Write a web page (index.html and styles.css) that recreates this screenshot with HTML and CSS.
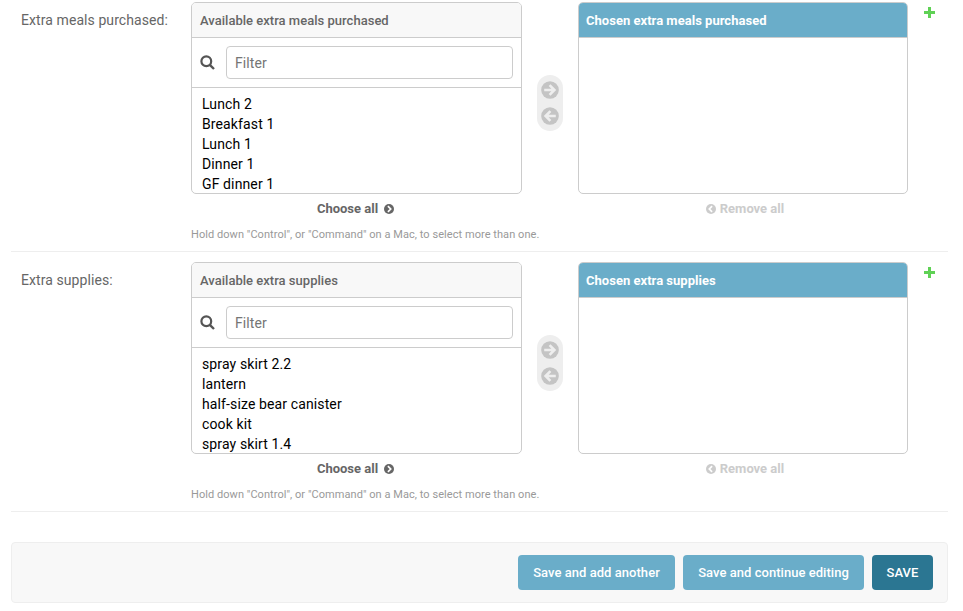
FILE: index.html
```html
<!DOCTYPE html>
<html lang="en">
<head>
<meta charset="utf-8">
<title>Change order</title>
<link rel="stylesheet" href="styles.css">
</head>
<body>
<svg class="defs" width="0" height="0" aria-hidden="true">
  <symbol id="search" viewBox="0 0 15 15"><circle cx="6.3" cy="6.3" r="4.9" fill="none" stroke="currentColor" stroke-width="2.2"/><path d="M9.8 9.8 14 14" stroke="currentColor" stroke-width="2.4"/></symbol>
  <symbol id="arrow" viewBox="0 0 18 18"><circle cx="9" cy="9" r="8.8" fill="#c4c4c4"/><path d="M3.2 9H13M8.6 4.2 13.4 9 8.6 13.8" fill="none" stroke="#eee" stroke-width="2.6"/></symbol>
  <symbol id="chevron" viewBox="0 0 10 10"><circle cx="5" cy="5" r="5" fill="currentColor"/><path d="M3.9 2.2 6.7 5 3.9 7.8" fill="none" stroke="#fff" stroke-width="1.7"/></symbol>
  <symbol id="plus" viewBox="0 0 11 11"><path d="M5.5 0V11M0 5.5H11" stroke="#5fd155" stroke-width="3"/></symbol>
</svg>
<main>
  <section class="form-row first">
    <label class="name">Extra meals purchased:</label>
    <div class="field">
      <div class="selector">
        <div class="available">
          <div class="box">
            <h2>Available extra meals purchased</h2>
            <div class="filter"><svg class="search"><use href="#search"/></svg><input type="text" placeholder="Filter"></div>
            <ul><li>Lunch 2</li><li>Breakfast 1</li><li>Lunch 1</li><li>Dinner 1</li><li>GF dinner 1</li></ul>
          </div>
          <a class="all">Choose all<svg class="chev"><use href="#chevron"/></svg></a>
        </div>
        <div class="chooser"><svg><use href="#arrow"/></svg><svg class="flip"><use href="#arrow"/></svg></div>
        <div class="chosen">
          <div class="box"><h2>Chosen extra meals purchased</h2></div>
          <a class="all off"><svg class="chev flip"><use href="#chevron"/></svg>Remove all</a>
        </div>
        <svg class="plus"><use href="#plus"/></svg>
      </div>
      <p class="help">Hold down "Control", or "Command" on a Mac, to select more than one.</p>
    </div>
  </section>
  <section class="form-row">
    <label class="name">Extra supplies:</label>
    <div class="field">
      <div class="selector">
        <div class="available">
          <div class="box">
            <h2>Available extra supplies</h2>
            <div class="filter"><svg class="search"><use href="#search"/></svg><input type="text" placeholder="Filter"></div>
            <ul><li>spray skirt 2.2</li><li>lantern</li><li>half-size bear canister</li><li>cook kit</li><li>spray skirt 1.4</li></ul>
          </div>
          <a class="all">Choose all<svg class="chev"><use href="#chevron"/></svg></a>
        </div>
        <div class="chooser"><svg><use href="#arrow"/></svg><svg class="flip"><use href="#arrow"/></svg></div>
        <div class="chosen">
          <div class="box"><h2>Chosen extra supplies</h2></div>
          <a class="all off"><svg class="chev flip"><use href="#chevron"/></svg>Remove all</a>
        </div>
        <svg class="plus"><use href="#plus"/></svg>
      </div>
      <p class="help">Hold down "Control", or "Command" on a Mac, to select more than one.</p>
    </div>
  </section>
  <div class="submit-row">
    <button class="another">Save and add another</button>
    <button class="continue">Save and continue editing</button>
    <button class="save">SAVE</button>
  </div>
</main>
</body>
</html>
```
FILE: styles.css
```css
* { box-sizing: border-box; }
body { margin: 0; background: #fff; color: #666; font: 14px/20px Roboto, "Liberation Sans", sans-serif; }
.defs { position: absolute; }
svg { display: block; flex: none; }
main { width: 937px; margin-left: 11px; }
.form-row { display: flex; height: 260px; padding: 10px 0 0 10px; border-bottom: 1px solid #eee; }
.form-row.first { height: 252px; padding-top: 2px; }
.name { width: 170px; padding-top: 8px; white-space: nowrap; letter-spacing: .08px; }
.selector { display: flex; align-items: flex-start; }
.available { width: 331px; }
.chosen { width: 330px; }
.box { height: 192px; overflow: hidden; border: 1px solid #ccc; border-radius: 5px; }
h2 { height: 34px; box-sizing: content-box; margin: 0; padding: 0 8px; border-bottom: 1px solid #ccc; background: #f8f8f8; font-size: 13px; font-weight: 500; line-height: 35px; letter-spacing: .02px; }
.chosen h2 { padding-left: 7px; background: #6aadc9; color: #fff; font-weight: 700; }
.filter { display: flex; align-items: center; height: 50px; padding: 0 8px; border-bottom: 1px solid #ccc; }
.search { width: 15px; height: 15px; margin-right: 11px; color: #555; }
input { width: 287px; height: 33px; padding: 0 8px; border: 1px solid #ccc; border-radius: 4px; font: 14px Roboto, sans-serif; letter-spacing: .1px; }
input::placeholder { color: #757575; opacity: 1; }
ul { margin: 0; padding: 6px 10px 0; list-style: none; color: #000; letter-spacing: .12px; }
.all { display: flex; justify-content: center; align-items: center; height: 30px; padding-right: 2px; font-size: 13px; font-weight: 700; }
.all.off { padding: 0 0 0 4px; color: #ccc; }
.chev { width: 10px; height: 10px; margin-left: 6px; }
.off .chev { margin: 0 4px 0 0; }
.flip { transform: scaleX(-1); }
.chooser { display: flex; flex-direction: column; gap: 8px; width: 26px; height: 56px; margin: 73px 15px 0; padding: 6px 4px; border-radius: 13px; background: #eee; }
.chooser svg { width: 18px; height: 18px; }
.plus { width: 11px; height: 11px; margin: 5px 0 0 16px; }
.help { margin: 1px 0 0; font-size: 11px; color: #999; letter-spacing: .055px; }
.submit-row { display: flex; justify-content: flex-end; gap: 8px; height: 61px; margin-top: 30px; padding: 12px 14px; border: 1px solid #eee; border-radius: 4px; background: #f8f8f8; }
button { height: 35px; padding: 0; border: 0; border-radius: 4px; background: #6aadc9; color: #fff; font: 500 13px Roboto, sans-serif; letter-spacing: .04px; }
.another { width: 157px; }
.continue { width: 181px; }
.save { width: 61px; background: #2b7692; }
```
